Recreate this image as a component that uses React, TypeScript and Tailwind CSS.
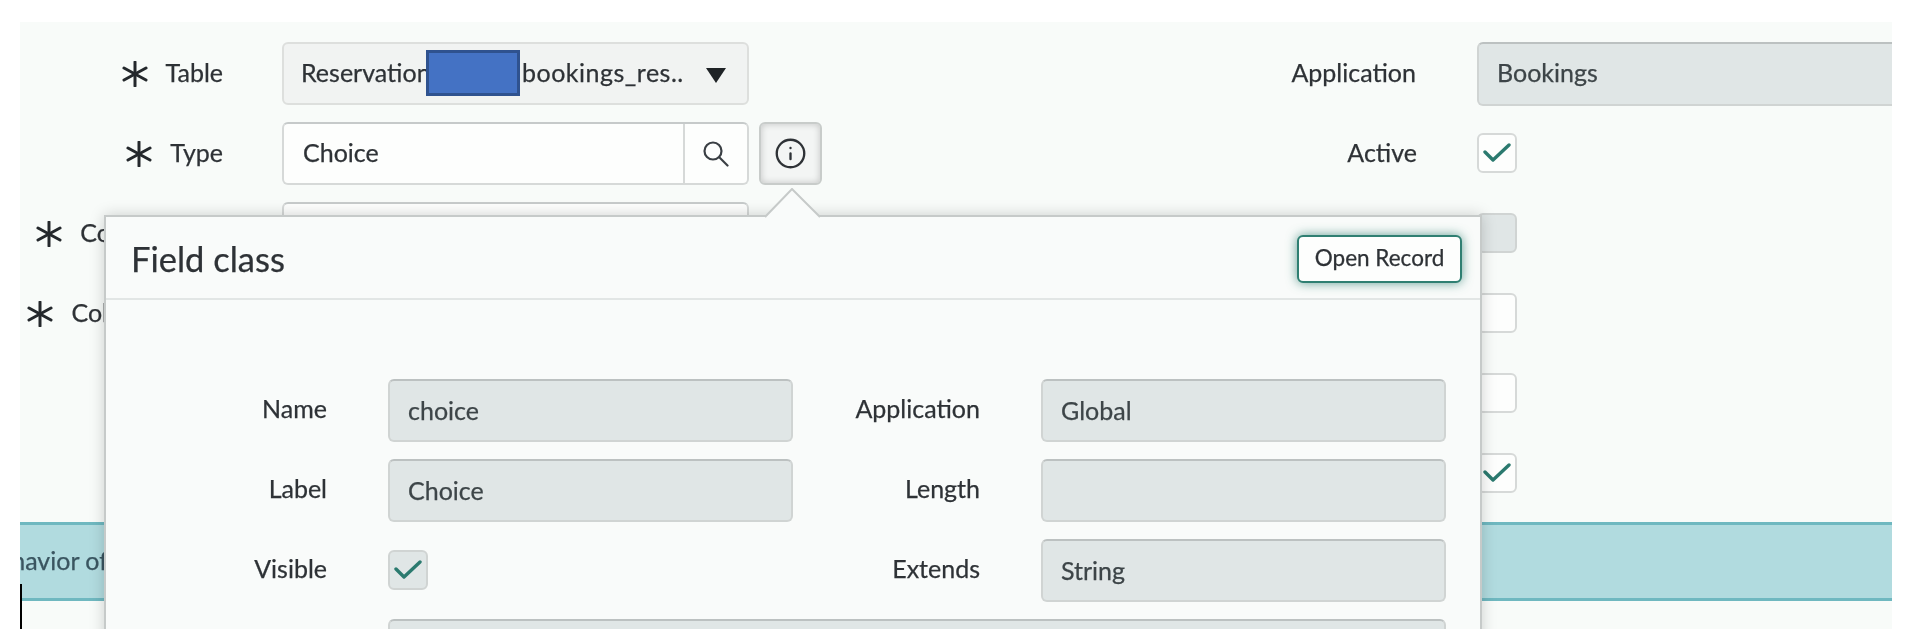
import { Info } from "lucide-react";

const font = "font-['Lato',sans-serif]";

function Asterisk() {
  return (
    <svg width="26" height="26" viewBox="0 0 26 26" className="shrink-0 mr-[18px] -ml-[1px]" stroke="#24282c" strokeWidth="3" strokeLinecap="round">
      <line x1="13" y1="1" x2="13" y2="25" />
      <line x1="2" y1="7" x2="24" y2="19" />
      <line x1="24" y1="7" x2="2" y2="19" />
    </svg>
  );
}

function Check() {
  return (
    <svg width="28" height="20" viewBox="0 0 28 20" fill="none" stroke="#2b7a6f" strokeWidth="3.4" strokeLinecap="round" strokeLinejoin="round">
      <polyline points="2,9 10,17 26,2" />
    </svg>
  );
}

function Box({ checked, readonly }: { checked?: boolean; readonly?: boolean }) {
  return (
    <div
      className={
        readonly
          ? "w-[40px] h-[40px] -mt-[2px] rounded-[6px] border-2 border-[#d0d4d3] bg-[#e0e6e6] flex items-center justify-center"
          : "w-[40px] h-[40px] -mt-[2px] rounded-[6px] border-2 border-[#d6d9d8] bg-[#fdfefd] flex items-center justify-center"
      }
    >
      {checked ? <Check /> : null}
    </div>
  );
}

function LeftLabel({ text }: { text: string }) {
  return (
    <div className="w-[203px] flex items-center justify-end whitespace-nowrap">
      <Asterisk />
      <span className="mb-[2px]">{text}</span>
    </div>
  );
}

function GreyField({ value, className }: { value?: string; className: string }) {
  return (
    <div className={"h-[63px] rounded-[6px] border-2 border-[#d0d4d3] border-t-[#bcc1c1] bg-[#e0e6e6] pl-[18px] pb-[1px] flex items-center text-[#3d4548] " + className}>
      {value}
    </div>
  );
}

function PopLabel({ text }: { text: string }) {
  return <div className="flex items-center justify-end -mt-[5px]">{text}</div>;
}

export default function App() {
  return (
    <div className={"h-[644px] w-[1912px] bg-white pt-[22px] pl-[20px] overflow-hidden blur-[0.4px] text-[25px] leading-none text-[#2e3236] [-webkit-text-stroke:0.25px_currentColor] " + font}>
      <div className="relative w-[1872px] h-[607px] overflow-hidden bg-[#f8fbf9]">
        <div className="flex pt-[20px] h-[500px]">
          <div className="w-[1000px] flex flex-col gap-[17px] shrink-0">
            <div className="flex h-[63px]">
              <LeftLabel text="Table" />
              <div className="relative ml-[59px] w-[467px] rounded-[6px] border-2 border-[#dddfdd] bg-[#f1f3f2] pl-[17px] flex items-center whitespace-nowrap">
                <span className="w-[221px] mb-[2px]">Reservation</span>
                <span className="tracking-[0.02em] mb-[2px]">bookings_res..</span>
                <svg width="20" height="15" viewBox="0 0 20 15" className="ml-[22px] mt-[3px]">
                  <polygon points="0,0 20,0 10,15" fill="#1f2326" />
                </svg>
                <div className="absolute left-[142px] top-[6px] w-[94px] h-[46px] bg-[#4472c4] border-[3px] border-[#2f528f]" />
              </div>
            </div>
            <div className="flex h-[63px]">
              <LeftLabel text="Type" />
              <div className="ml-[59px] w-[467px] rounded-[6px] border-2 border-[#d6d9d8] border-t-[#c6caca] bg-[#fdfefd] flex items-center">
                <span className="flex-1 pl-[19px] mb-[2px]">Choice</span>
                <div className="w-[64px] h-full border-l-2 border-[#d6d9d8] flex items-center justify-center">
                  <svg width="26" height="26" viewBox="0 0 26 26" fill="none" stroke="#3a3f44" strokeWidth="2.2" strokeLinecap="round">
                    <circle cx="10" cy="10" r="8.5" />
                    <line x1="16.5" y1="16.5" x2="24.5" y2="24.5" />
                  </svg>
                </div>
              </div>
              <div className="ml-[10px] w-[63px] rounded-[6px] border-2 border-[#c8ccca] bg-[#f3f5f4] shadow-[inset_0_0_7px_rgba(0,0,0,0.2)] flex items-center justify-center">
                <Info size={33} strokeWidth={1.7} color="#2e3236" />
              </div>
            </div>
            <div className="flex h-[63px]">
              <LeftLabel text="Column label" />
              <div className="ml-[59px] w-[467px] rounded-[6px] border-2 border-[#d6d9d8] border-t-[#c6caca] bg-[#fdfefd]" />
            </div>
            <div className="flex h-[63px]">
              <LeftLabel text="Column name" />
            </div>
          </div>
          <div className="flex-1 flex flex-col gap-[17px]">
            <div className="flex h-[63px] items-center">
              <div className="w-[396px] text-right mb-[2px]">Application</div>
              <div className="ml-[61px] w-[500px] h-[64px] shrink-0 rounded-[6px] border-2 border-[#d0d4d3] border-t-[#bcc1c1] bg-[#e0e6e6] pl-[18px] pb-[2px] flex items-center text-[#3d4548]">Bookings</div>
            </div>
            <div className="flex h-[63px] items-center">
              <div className="w-[397px] text-right mb-[2px]">Active</div>
              <div className="ml-[60px]"><Box checked /></div>
            </div>
            <div className="flex h-[63px] items-center">
              <div className="w-[397px]" />
              <div className="ml-[60px]"><Box readonly /></div>
            </div>
            <div className="flex h-[63px] items-center">
              <div className="w-[397px]" />
              <div className="ml-[60px]"><Box /></div>
            </div>
            <div className="flex h-[63px] items-center">
              <div className="w-[397px]" />
              <div className="ml-[60px]"><Box /></div>
            </div>
            <div className="flex h-[63px] items-center">
              <div className="w-[397px]" />
              <div className="ml-[60px]"><Box checked /></div>
            </div>
          </div>
        </div>

        <div className="h-[79px] border-y-[3px] border-[#6fb8c0] bg-[#b1dbdf] flex items-center text-[#3a5560] whitespace-nowrap">
          <span className="-ml-[36px] mb-[2px]">behavior of this field</span>
        </div>

        <div className="absolute left-0 top-[562px] w-[2px] h-[45px] bg-black" />

        <div className="absolute left-[84px] top-[193px] w-[1378px] h-[500px] border-2 border-[#c6cac9] bg-[#f9fbfa] shadow-[0_0_14px_rgba(0,0,0,0.18)]">
          <svg width="60" height="30" viewBox="0 0 60 30" className="absolute left-[657px] -top-[29px]" fill="#f9fbfa" stroke="#c6cac9" strokeWidth="2">
            <polyline points="2,29 29,1 57,29" />
          </svg>
          <div className="h-[83px] border-b-2 border-[#e2e6e5] flex items-center justify-between pl-[25px] pr-[18px]">
            <span className="text-[34.5px] mt-[4px] text-[#2e3236]">Field class</span>
            <div className="w-[165px] h-[48px] mt-[2px] rounded-[6px] border-2 border-[#2f7f72] bg-[#fdfefd] shadow-[0_0_11px_rgba(47,127,114,0.75)] flex items-center justify-center text-[22.5px]">
              Open Record
            </div>
          </div>
          <div className="pt-[79px] grid grid-cols-[221px_466px_187px_466px] gap-y-[17px]">
            <PopLabel text="Name" />
            <GreyField value="choice" className="ml-[61px] w-[405px]" />
            <PopLabel text="Application" />
            <GreyField value="Global" className="ml-[61px] w-[405px]" />
            <PopLabel text="Label" />
            <GreyField value="Choice" className="ml-[61px] w-[405px]" />
            <PopLabel text="Length" />
            <GreyField className="ml-[61px] w-[405px]" />
            <PopLabel text="Visible" />
            <div className="ml-[61px] h-[63px] flex items-center"><Box checked readonly /></div>
            <PopLabel text="Extends" />
            <GreyField value="String" className="ml-[61px] w-[405px]" />
            <div />
            <GreyField className="ml-[61px] col-span-3 w-[1058px]" />
          </div>
        </div>
      </div>
    </div>
  );
}
